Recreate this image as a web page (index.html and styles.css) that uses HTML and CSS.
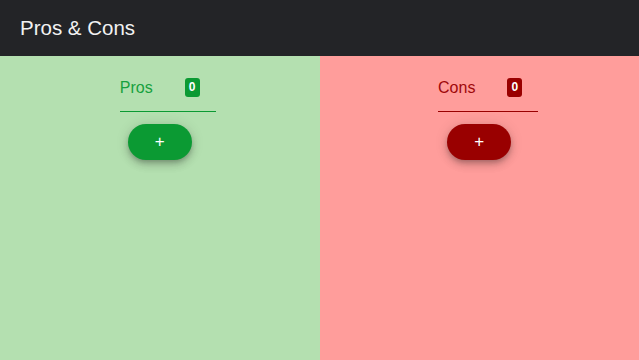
FILE: index.html
```html
<!DOCTYPE html>
<html lang="en">
<head>
    <meta charset="UTF-8">
    <meta name="viewport" content="width=device-width, initial-scale=1.0">
    <title>Pros &amp; Cons</title>
    <link rel="stylesheet" href="styles.css">
</head>
<body>

<!-- Top bar -->
<header class="app-bar">
    <div class="app-title">Pros &amp; Cons</div>
</header>

<!-- Two columns -->
<main class="board">
    <section class="column pros">
        <div class="column-head">
            <span class="column-name">Pros</span>
            <span class="count">0</span>
        </div>
        <button class="add-btn">+</button>
    </section>
    <section class="column cons">
        <div class="column-head">
            <span class="column-name">Cons</span>
            <span class="count">0</span>
        </div>
        <button class="add-btn">+</button>
    </section>
</main>

</body>
</html>
```

FILE: styles.css
```css
/* Page */
body {
    margin: 0;
    font-family: 'Liberation Sans', Arial, sans-serif;
    height: 100vh;
    display: flex;
    flex-direction: column;
    overflow: hidden;
}

/* Top bar */
.app-bar {
    height: 56px;
    background-color: #232427;
    display: flex;
    align-items: center;
    padding: 0 20px;
    flex-shrink: 0;
}

.app-title {
    color: #f2f2f2;
    font-size: 20.5px;
}

/* Board with two columns */
.board {
    flex: 1;
    display: flex;
}

.column {
    flex: 1;
    display: flex;
    flex-direction: column;
    align-items: center;
    padding-top: 19px;
}

.pros {
    background-color: #b4e0b0;
    --accent: #0b9a33;
    --label: #17a13e;
}

.cons {
    background-color: #ff9d9b;
    --accent: #990000;
    --label: #a0080b;
}

/* Column title with counter */
.column-head {
    display: flex;
    align-items: center;
    margin-left: 16px; /* shifts the block a bit to the right */
    padding: 3px 16px 14px 0;
    border-bottom: 1px solid var(--accent);
}

.cons .column-head {
    margin-left: 18px;
}

.column-name {
    font-size: 16px;
    color: var(--label);
}

.count {
    margin-left: 32px;
    min-width: 15px;
    height: 19px;
    line-height: 19px;
    border-radius: 3px;
    background-color: var(--accent);
    color: #fff;
    font-size: 12px;
    font-weight: bold;
    text-align: center;
}

/* Add button */
.add-btn {
    margin-top: 12px;
    width: 64px;
    height: 36px;
    border: none;
    border-radius: 18px;
    background-color: var(--accent);
    color: #fff;
    font-family: inherit;
    font-size: 17px;
    cursor: pointer;
    box-shadow: 0 3px 5px -1px rgba(0, 0, 0, 0.2), 0 5px 8px 0 rgba(0, 0, 0, 0.14), 0 1px 14px 0 rgba(0, 0, 0, 0.12);
}
```
